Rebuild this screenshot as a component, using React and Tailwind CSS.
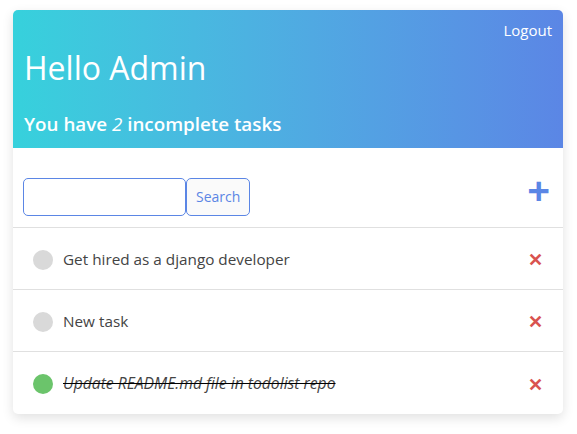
export default function App() {
  const tasks = [
    { t: "Get hired as a django developer", done: false },
    { t: "New task", done: false },
    { t: "Update README.md file in todolist repo", done: true },
  ];
  return (
    <div className="bg-white w-[577px] h-[434px] pt-[10px] pl-[13px]" style={{ fontFamily: '"Open Sans", "Noto Sans", sans-serif' }}>
      <div className="w-[550px] rounded-[5px] bg-white shadow-[0_4px_12px_rgba(0,0,0,0.12)] overflow-hidden">
        <div className="h-[138px] bg-gradient-to-r from-[#36d1dc] to-[#5b86e5] flex flex-col px-[11px] text-white">
          <div className="flex justify-end pt-[10px] h-[38px]">
            <span className="text-[15px] leading-[20px]">Logout</span>
          </div>
          <div className="text-[32px] leading-[40px] mt-[0px]">Hello Admin</div>
          <div className="text-[18.8px] leading-[24px] font-semibold mt-[24px]">
            You have <i className="font-normal">2</i> incomplete tasks
          </div>
        </div>
        <div className="flex items-center justify-between px-[10px] h-[80px] border-b border-[#e0e0e0] pt-[18px]">
          <div className="flex">
            <input className="w-[163px] h-[38px] border border-[#5b86e5] rounded-[5px] outline-none px-2" />
            <button className="h-[38px] px-[9px] border border-[#5b86e5] rounded-[5px] bg-[#fafafa] text-[#5b86e5] text-[14px]">Search</button>
          </div>
          <span className="text-[#5b86e5] text-[40px] font-bold leading-none mr-[3px] mb-[14px]">+</span>
        </div>
        {tasks.map((x, i) => (
          <div key={i} className={`flex items-center h-[62px] px-[20px] pt-[2px] ${i < 2 ? "border-b border-[#e0e0e0]" : ""}`}>
            <span className={`w-[20px] h-[20px] rounded-full ${x.done ? "bg-[#6bc46b]" : "bg-[#d9d9d9]"}`} />
            <span className={`ml-[10px] text-[#444444] ${x.done ? "text-[15.7px] italic line-through decoration-black" : "text-[15.3px]"}`}>{x.t}</span>
            <span className="ml-auto mr-[0px] text-[#d9534f] text-[18px] font-bold">✕</span>
          </div>
        ))}
      </div>
    </div>
  );
}
